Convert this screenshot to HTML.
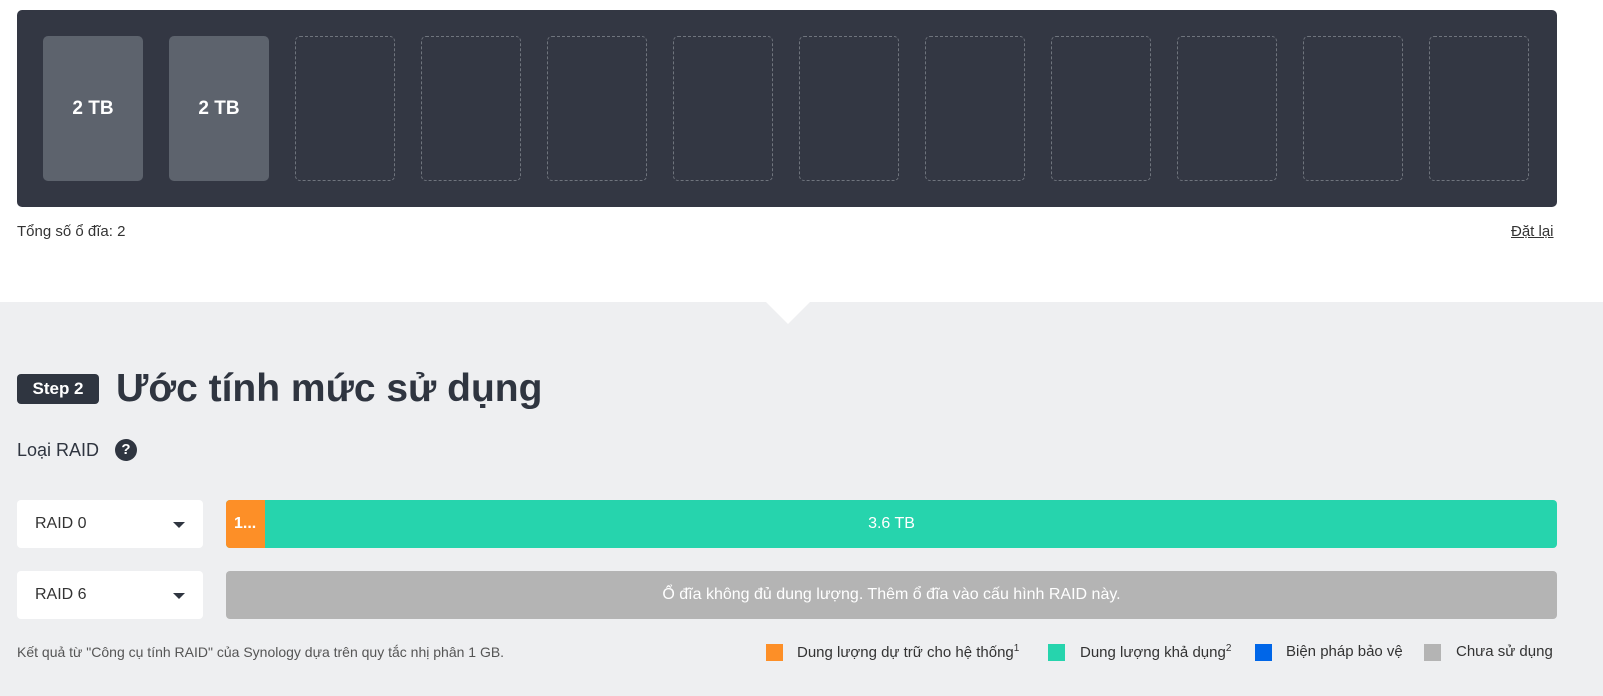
<!DOCTYPE html>
<html><head><meta charset="utf-8"><style>
*{margin:0;padding:0;box-sizing:border-box}
body{width:1603px;height:696px;background:#fff;font-family:"Liberation Sans",sans-serif;color:#2f3540;position:relative;overflow:hidden}
.panel{position:absolute;left:17px;top:10px;width:1540px;height:197px;background:#333743;border-radius:5px}
.slot{position:absolute;top:26px;width:100px;height:145px;border-radius:5px}
.full{background:#5d636d;color:#fff;font-weight:bold;font-size:19px;display:flex;align-items:center;justify-content:center}
.empty{border:1px dashed #6f747d}
.abs{position:absolute}
.grey{position:absolute;left:0;top:302px;width:1603px;height:394px;background:#eeeff1}
.sel{position:absolute;left:17px;width:186px;height:48px;background:#fff;border-radius:4px;font-size:16px;padding:0 0 0 18px;line-height:48px;color:#333}
.sel:after{content:"";position:absolute;right:18px;top:22px;border-left:6px solid transparent;border-right:6px solid transparent;border-top:6px solid #2f3540}
.bar{position:absolute;left:226px;width:1331px;height:48px;border-radius:4px;overflow:hidden;color:#fff;font-size:16px;line-height:48px}
.lg{position:absolute;top:644px;width:17px;height:17px}
.lt{position:absolute;top:643px;font-size:15px;color:#333}
</style></head><body>
<div class="panel">
<div class="slot full" style="left:26px">2 TB</div>
<div class="slot full" style="left:152px">2 TB</div>
<div class="slot empty" style="left:278px"></div>
<div class="slot empty" style="left:404px"></div>
<div class="slot empty" style="left:530px"></div>
<div class="slot empty" style="left:656px"></div>
<div class="slot empty" style="left:782px"></div>
<div class="slot empty" style="left:908px"></div>
<div class="slot empty" style="left:1034px"></div>
<div class="slot empty" style="left:1160px"></div>
<div class="slot empty" style="left:1286px"></div>
<div class="slot empty" style="left:1412px"></div>
</div>
<div class="abs" style="left:17px;top:223px;font-size:15px;color:#333">Tổng số ổ đĩa: 2</div>
<div class="abs" style="left:1511px;top:223px;font-size:15px;color:#333;text-decoration:underline">Đặt lại</div>
<div class="grey"></div>
<div class="abs" style="left:766px;top:302px;width:0;height:0;border-left:22px solid transparent;border-right:22px solid transparent;border-top:22px solid #fff"></div>
<div class="abs" style="left:17px;top:374px;width:82px;height:30px;background:#2f3540;border-radius:4px;color:#fff;font-weight:bold;font-size:17px;line-height:30px;text-align:center">Step 2</div>
<div class="abs" style="left:116px;top:363px;font-size:39px;font-weight:bold;color:#2f3540;line-height:52px">Ước tính mức sử dụng</div>
<div class="abs" style="left:17px;top:439px;font-size:18px;color:#2f3540;line-height:22px">Loại RAID</div>
<div class="abs" style="left:115px;top:439px;width:22px;height:22px;border-radius:50%;background:#2f3540;color:#fff;font-weight:bold;font-size:15px;text-align:center;line-height:22px">?</div>
<div class="sel" style="top:500px">RAID 0</div>
<div class="bar" style="top:500px;background:#26d4ad;text-align:center"><div style="position:absolute;left:0;top:0;width:39px;height:48px;background:#fd8f27;text-align:left;padding-left:8px;font-weight:bold">1...</div>3.6 TB</div>
<div class="sel" style="top:571px">RAID 6</div>
<div class="bar" style="top:571px;background:#b4b4b4;text-align:center">Ổ đĩa không đủ dung lượng. Thêm ổ đĩa vào cấu hình RAID này.</div>
<div class="abs" style="left:17px;top:644px;font-size:14px;color:#555">Kết quả từ "Công cụ tính RAID" của Synology dựa trên quy tắc nhị phân 1 GB.</div>
<div class="lg" style="left:766px;background:#fd8f27"></div><div class="lt" style="left:797px">Dung lượng dự trữ cho hệ thống<sup style="font-size:10px">1</sup></div>
<div class="lg" style="left:1048px;background:#26d4ad"></div><div class="lt" style="left:1080px">Dung lượng khả dụng<sup style="font-size:10px">2</sup></div>
<div class="lg" style="left:1255px;background:#0066e8"></div><div class="lt" style="left:1286px">Biện pháp bảo vệ</div>
<div class="lg" style="left:1424px;background:#b4b4b4"></div><div class="lt" style="left:1456px">Chưa sử dụng</div>
</body></html>
